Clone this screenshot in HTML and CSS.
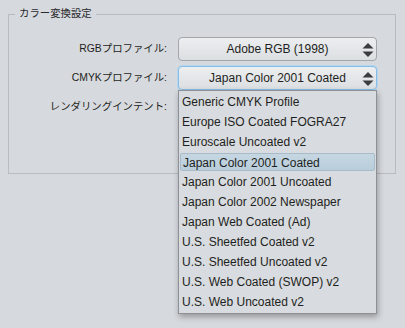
FILE: index.html
```html
<!DOCTYPE html>
<html lang="ja">
<head>
    <meta charset="UTF-8">
    <meta name="viewport" content="width=device-width, initial-scale=1.0">
    <title>カラー変換設定</title>
    <link rel="stylesheet" href="styles.css">
</head>
<body>
    <div class="group">
        <div class="legend">カラー変換設定</div>
        <div class="rows">
            <label class="label">RGBプロファイル:</label>
            <div class="select">
                <span>Adobe RGB (1998)</span>
                <svg class="arrows" width="12" height="16" viewBox="0 0 12 16">
                    <path d="M6 1 L11.5 6.5 H0.5 Z" fill="#3b3c3e"/>
                    <path d="M6 15 L11.5 9.5 H0.5 Z" fill="#3b3c3e"/>
                </svg>
            </div>

            <label class="label">CMYKプロファイル:</label>
            <div class="select-wrap">
                <div class="select focused">
                    <span>Japan Color 2001 Coated</span>
                    <svg class="arrows" width="12" height="16" viewBox="0 0 12 16">
                        <path d="M6 1 L11.5 6.5 H0.5 Z" fill="#3b3c3e"/>
                        <path d="M6 15 L11.5 9.5 H0.5 Z" fill="#3b3c3e"/>
                    </svg>
                </div>
                <ul class="menu">
                    <li>Generic CMYK Profile</li>
                    <li>Europe ISO Coated FOGRA27</li>
                    <li>Euroscale Uncoated v2</li>
                    <li class="active">Japan Color 2001 Coated</li>
                    <li>Japan Color 2001 Uncoated</li>
                    <li>Japan Color 2002 Newspaper</li>
                    <li>Japan Web Coated (Ad)</li>
                    <li>U.S. Sheetfed Coated v2</li>
                    <li>U.S. Sheetfed Uncoated v2</li>
                    <li>U.S. Web Coated (SWOP) v2</li>
                    <li>U.S. Web Uncoated v2</li>
                </ul>
            </div>

            <label class="label">レンダリングインテント:</label>
            <div></div>
        </div>
    </div>
</body>
</html>
```

FILE: styles.css
```css
html, body {
    height: 100%;
}
body {
    margin: 0;
    box-sizing: border-box;
    background-color: #d6d9dd;
    font-family: "Liberation Sans", "Noto Sans CJK JP", sans-serif;
    color: #1e1f21;
    padding-top: 14px;
}
.group {
    margin: 0 9px 0 8px;
    border: 1px solid #b8bbbf;
}
.legend {
    width: fit-content;
    margin: -9px 0 0 6px;
    padding: 0 4px;
    font-size: 10.4px;
    line-height: 16px;
    color: #2a2b2d;
    background-color: #d6d9dd;
}
.rows {
    display: grid;
    grid-template-columns: 158px 199px;
    grid-auto-rows: 24px;
    column-gap: 11px;
    row-gap: 5px;
    padding: 15px 0 54px 0;
}
.label {
    font-size: 10.4px;
    text-align: right;
    line-height: 24px;
    white-space: nowrap;
}
.select-wrap {
    position: relative;
    z-index: 2;
}
.select {
    height: 24px;
    box-sizing: border-box;
    border: 1px solid #a3a6aa;
    border-radius: 4px;
    background: linear-gradient(#eceef0, #dcdfe2);
    display: flex;
    align-items: center;
    justify-content: center;
    font-size: 12px;
    position: relative;
}
.select.focused {
    border-color: #86bde6;
    box-shadow: 0 0 0 1px #b4d6ef;
}
.arrows {
    position: absolute;
    right: 2px;
    top: 4px;
}
.menu {
    position: absolute;
    top: 24px;
    left: 0;
    width: 199px;
    box-sizing: border-box;
    margin: 0;
    padding: 1px 0;
    list-style: none;
    background-color: #d8dbdf;
    border: 1px solid #8d9094;
    box-shadow: 1px 3px 6px rgba(0, 0, 0, 0.3);
}
.menu li {
    height: 20px;
    line-height: 20px;
    padding-left: 3px;
    font-size: 12px;
    white-space: nowrap;
}
.menu li.active {
    height: 18px;
    line-height: 18px;
    margin: 1px 1px;
    padding-left: 2px;
    box-sizing: border-box;
    border: 1px solid #a7bccb;
    border-radius: 2px;
    background: linear-gradient(#c6d7e2, #b9cddb);
}
```
